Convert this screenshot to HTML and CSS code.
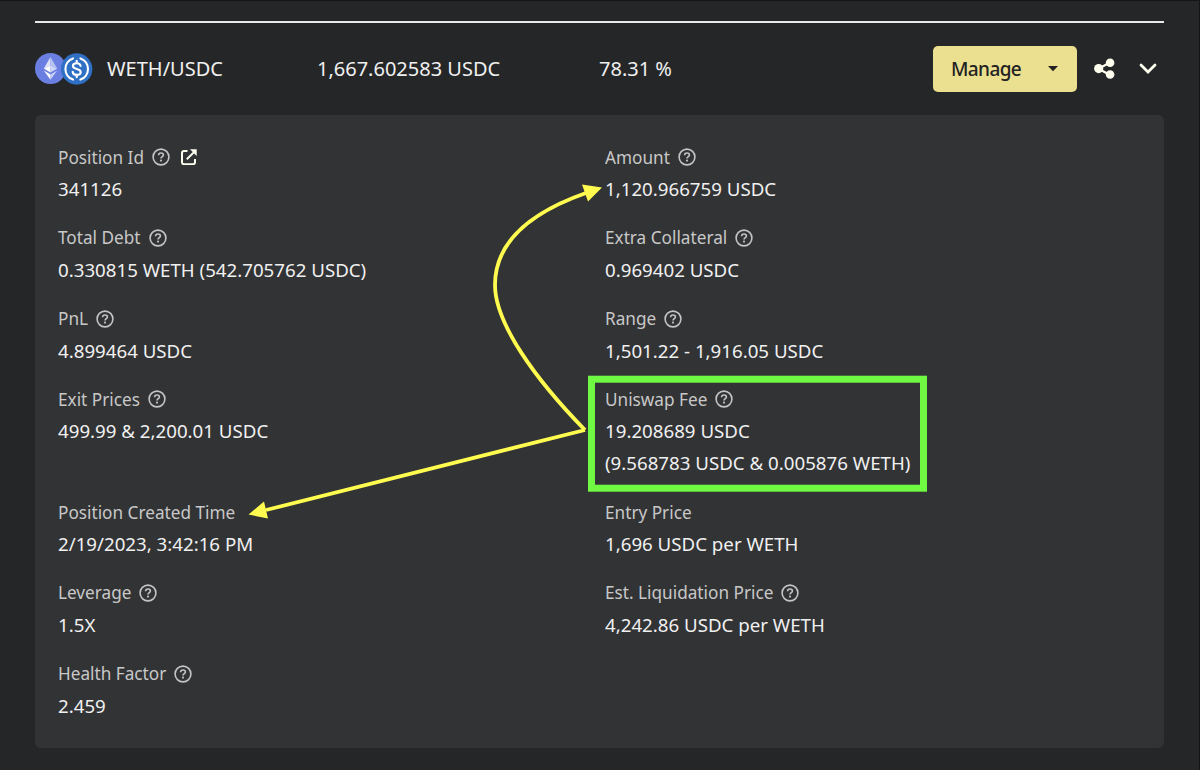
FILE: index.html
```html
<!DOCTYPE html>
<html lang="en">
<head>
  <meta charset="UTF-8">
  <meta name="viewport" content="width=device-width, initial-scale=1.0">
  <title>WETH/USDC Position</title>
  <link rel="stylesheet" href="styles.css">
</head>
<body>

<svg class="sprite" width="0" height="0">
  <symbol id="help" viewBox="0 0 18 18">
    <circle cx="9" cy="9" r="7.9" fill="none" stroke="#c4c4c4" stroke-width="1.6"/>
    <path d="M6.600 7.200C6.600 5.800 7.600 5 9 5s2.400.8 2.400 2c0 1.600-2.400 1.700-2.400 3.500" fill="none" stroke="#c4c4c4" stroke-width="1.600"/>
    <circle cx="9" cy="12.600" r="1.050" fill="#c4c4c4"/>
  </symbol>
</svg>

<div class="container">
  <header class="position-header">
    <div class="pair">
      <svg class="tokens" viewBox="0 0 58 32">
        <circle cx="15.5" cy="15.5" r="15.5" fill="#6b7fe3"/>
        <path d="M15.5 4 8.8 15.6l6.7-3z" fill="#dfe3fa"/>
        <path d="M15.5 4v8.6l6.7 3z" fill="#b9c3f3"/>
        <path d="M8.8 15.6l6.7 4v-7z" fill="#fff"/>
        <path d="M22.2 15.6l-6.7 4v-7z" fill="#d0d7f7"/>
        <path d="M8.8 17.6l6.7 9.2v-5.2z" fill="#fff"/>
        <path d="M22.2 17.6l-6.7 9.2v-5.2z" fill="#c8d0f6"/>
        <circle cx="41.7" cy="16" r="15.7" fill="#2f6fc4"/>
        <g fill="none" stroke="#fff" stroke-width="2.1" stroke-linecap="round">
          <path d="M38 5.4a11.2 11.2 0 0 0 0 21.2M45.4 5.4a11.2 11.2 0 0 1 0 21.2"/>
          <path d="M45.6 12.9c-.3-1.7-1.8-2.7-3.9-2.7-2.300 0-3.800 1-3.800 2.700 0 4 7.800 2 7.800 6 0 1.900-1.700 2.900-4 2.900s-3.900-1.100-4-2.900M41.700 7.800v2.200M41.700 22v2.200"/>
        </g>
      </svg>
      <span class="text">WETH/USDC</span>
    </div>
    <div class="text">1,667.602583 USDC</div>
    <div class="text">78.31 %</div>
    <div class="actions">
      <button class="manage-btn">Manage
        <svg width="10" height="6" viewBox="0 0 10 6"><path d="M0 0h10L5 5.300z" fill="#222"/></svg>
      </button>
      <svg class="share-icon" viewBox="0 0 22 22">
        <path d="M16 4.500 4.500 10.700 16 17" fill="none" stroke="#fffff0" stroke-width="2.200"/>
        <circle cx="16.100" cy="4.800" r="4.300"/><circle cx="4.700" cy="10.600" r="4.600"/><circle cx="16.100" cy="16.500" r="4.300"/>
      </svg>
      <svg class="chevron" viewBox="0 0 18 12"><path d="M2 2l7 7 7-7" fill="none" stroke="#fffff0" stroke-width="2.800" stroke-linecap="round"/></svg>
    </div>
  </header>

  <div class="panel">
    <div class="item">
      <div class="label">Position Id <svg class="help"><use href="#help"/></svg>
        <svg class="link" viewBox="0 0 16 16"><path d="M6.500 2H3a2 2 0 0 0-2 2v9.200a2 2 0 0 0 2 2h9a2 2 0 0 0 2-2V10M5.800 10.300 13 3.100" fill="none" stroke="#fffff0" stroke-width="2"/><path d="M9 .3h6.700V7z" fill="#fffff0"/></svg>
      </div>
      <div class="value">341126</div>
    </div>
    <div class="item">
      <div class="label">Amount <svg class="help"><use href="#help"/></svg></div>
      <div class="value">1,120.966759 USDC</div>
    </div>
    <div class="item">
      <div class="label">Total Debt <svg class="help"><use href="#help"/></svg></div>
      <div class="value">0.330815 WETH (542.705762 USDC)</div>
    </div>
    <div class="item">
      <div class="label">Extra Collateral <svg class="help"><use href="#help"/></svg></div>
      <div class="value">0.969402 USDC</div>
    </div>
    <div class="item">
      <div class="label">PnL <svg class="help"><use href="#help"/></svg></div>
      <div class="value">4.899464 USDC</div>
    </div>
    <div class="item">
      <div class="label">Range <svg class="help"><use href="#help"/></svg></div>
      <div class="value">1,501.22 - 1,916.05 USDC</div>
    </div>
    <div class="item">
      <div class="label">Exit Prices <svg class="help"><use href="#help"/></svg></div>
      <div class="value">499.99 &amp; 2,200.01 USDC</div>
    </div>
    <div class="item">
      <div class="label">Uniswap Fee <svg class="help"><use href="#help"/></svg></div>
      <div class="value">19.208689 USDC</div>
      <div class="value">(9.568783 USDC &amp; 0.005876 WETH)</div>
    </div>
    <div class="item">
      <div class="label">Position Created Time</div>
      <div class="value">2/19/2023, 3:42:16 PM</div>
    </div>
    <div class="item">
      <div class="label">Entry Price</div>
      <div class="value">1,696 USDC per WETH</div>
    </div>
    <div class="item">
      <div class="label">Leverage <svg class="help"><use href="#help"/></svg></div>
      <div class="value">1.5X</div>
    </div>
    <div class="item">
      <div class="label">Est. Liquidation Price <svg class="help"><use href="#help"/></svg></div>
      <div class="value">4,242.86 USDC per WETH</div>
    </div>
    <div class="item">
      <div class="label">Health Factor <svg class="help"><use href="#help"/></svg></div>
      <div class="value">2.459</div>
    </div>
  </div>
</div>

<!-- highlight box and arrows -->
<svg class="annotations" viewBox="0 0 1200 770">
  <rect x="591.500" y="379.200" width="332" height="109" fill="none" stroke="#6ff942" stroke-width="7"/>
  <path d="M585 430C535 379 495 323 495 285C495 241 532 212 586 193M585 430 266 510" fill="none" stroke="#fffc4f" stroke-width="3.800"/>
  <path d="M602 187.500 582 184.500 588 201.500zM248.500 514.500 264 501.500 268 518.500z" fill="#fffc4f"/>
</svg>

</body>
</html>
```

FILE: styles.css
```css
* {
  box-sizing: border-box;
}
body {
  margin: 0;
  height: 770px;
  overflow: hidden;
  background: #252628;
  color: #f0f0f0;
  font-family: "Noto Sans", sans-serif;
  border-top: 1px solid #141517;
  border-right: 1px solid #141517;
}
.sprite {
  position: absolute;
}
.container {
  margin: 20px 35px 0;
  border-top: 2px solid #e8e8e8;
}
.position-header {
  display: grid;
  grid-template-columns: 282px 282px 1fr auto;
  align-items: center;
  height: 92px;
  font-size: 20px;
}
.position-header .text {
  padding-bottom: 2px;
}
.pair {
  display: flex;
  align-items: center;
  gap: 14px;
}
.tokens {
  width: 58px;
  height: 32px;
}
.actions {
  display: flex;
  align-items: center;
}
.manage-btn {
  display: flex;
  align-items: center;
  justify-content: space-between;
  width: 144px;
  height: 46px;
  padding: 0 19px 0 18px;
  border: none;
  border-radius: 5px;
  background: #ebdf90;
  color: #222;
  font-family: inherit;
  font-size: 19px;
  font-weight: 500;
  letter-spacing: -0.6px;
}
.share-icon {
  width: 22px;
  height: 22px;
  margin-left: 17px;
  fill: #fffff0;
}
.chevron {
  width: 18px;
  height: 12px;
  margin: 0 7px 0 23px;
}
.panel {
  display: grid;
  grid-template-columns: 547px 1fr;
  row-gap: 16.8px;
  height: 633px;
  padding: 26px 23px 0;
  align-content: start;
  border-radius: 6px;
  background: #323335;
}
.label {
  display: flex;
  align-items: center;
  height: 32px;
  font-size: 17.2px;
  color: #c8c8c8;
}
.value {
  height: 32px;
  line-height: 32px;
  font-size: 18.7px;
}
.help {
  width: 18px;
  height: 18px;
  margin-left: 8px;
}
.link {
  width: 16px;
  height: 16px;
  margin-left: 11px;
}
.annotations {
  position: absolute;
  top: 0;
  left: 0;
  width: 1200px;
  height: 770px;
}
```
